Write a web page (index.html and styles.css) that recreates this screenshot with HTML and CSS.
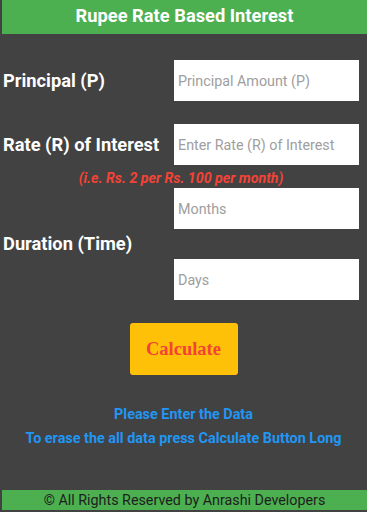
FILE: index.html
```html
<!DOCTYPE html>
<html lang="en">
<head>
  <meta charset="UTF-8" />
  <meta name="viewport" content="width=device-width, initial-scale=1.0"/>
  <title>Rupee Rate Based Interest</title>
  <link rel="stylesheet" href="styles.css">
</head>
<body>

<header>Rupee Rate Based Interest</header>

<main>
  <!-- Principal -->
  <div class="row row-principal">
    <label for="principal">Principal (P)</label>
    <input type="text" id="principal" placeholder="Principal Amount (P)" />
  </div>

  <!-- Rate -->
  <div class="row row-rate">
    <label for="rate">Rate (R) of Interest</label>
    <input type="text" id="rate" placeholder="Enter Rate (R) of Interest" />
  </div>
  <p class="hint">(i.e. Rs. 2 per Rs. 100 per month)</p>

  <!-- Duration -->
  <div class="row row-duration">
    <label for="months">Duration (Time)</label>
    <div class="duration-fields">
      <input type="text" id="months" placeholder="Months" />
      <input type="text" id="days" placeholder="Days" />
    </div>
  </div>

  <div class="button-row">
    <button id="calc-btn">Calculate</button>
  </div>

  <p class="msg msg-first">Please Enter the Data</p>
  <p class="msg">To erase the all data press Calculate Button Long</p>
</main>

<footer>© All Rights Reserved by Anrashi Developers</footer>

</body>
</html>
```

FILE: styles.css
```css
/* Basic reset */
* { margin: 0; padding: 0; box-sizing: border-box; }
html, body { height: 512px; overflow: hidden; }
body { font-family: Roboto, "Noto Sans", Arial, sans-serif; background-color: #424242; color: #fff; }

header { margin-left: 2px; height: 34px; background-color: #4caf50; color: #fff; font-size: 18.3px; font-weight: bold; text-align: center; line-height: 31px; }

main { height: 456px; padding: 26px 8px 0 3px; }

/* Label + input rows */
.row { display: flex; align-items: center; justify-content: space-between; }
.row label { font-size: 18.3px; font-weight: bold; color: #fff; }
.row input { width: 185px; height: 41px; border: none; background: #fff; padding: 0 4px; font-family: Roboto, Arial, sans-serif; font-size: 14.3px; color: #333; outline: none; }
.row input::placeholder { color: #9e9e9e; }

.row-rate { margin-top: 23px; }

.hint { height: 23px; line-height: 26px; text-align: center; color: #f44336; font-size: 14.2px; font-weight: bold; font-style: italic; }

.duration-fields { display: flex; flex-direction: column; gap: 30px; }
.row-duration label { margin-bottom: 2px; }

/* Calculate button */
.button-row { display: flex; justify-content: center; margin-top: 23px; padding-left: 5px; }
#calc-btn { width: 108px; height: 52px; border: none; border-radius: 3px; background-color: #ffc107; color: #f44336; font-family: "Liberation Serif", "DejaVu Serif", serif; font-size: 18.5px; font-weight: bold; cursor: pointer; }

.msg { text-align: center; color: #2196f3; font-size: 14.4px; font-weight: bold; line-height: 24px; padding-left: 5px; }
.msg-first { margin-top: 28px; }

footer { margin-left: 2px; height: 20px; background-color: #4caf50; color: #1e1e1e; font-size: 14.3px; text-align: center; line-height: 20px; }
```
